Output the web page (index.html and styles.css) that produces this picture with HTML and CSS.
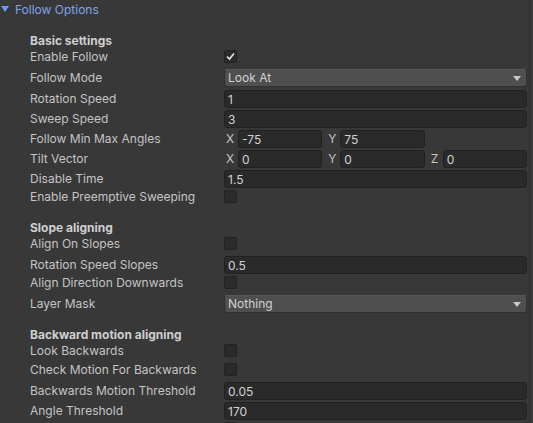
FILE: index.html
```html
<!DOCTYPE html>
<html>
<head>
<meta charset="utf-8">
<link rel="stylesheet" href="styles.css">
</head>
<body>
<div class="panel">
  <div class="foldout">
    <svg class="fold-arrow" width="8" height="7" viewBox="0 0 8 7"><polygon points="0,0 8,0 4,6" fill="#6d9cf0"/></svg>
    <span>Follow Options</span>
  </div>

  <div class="section-title">Basic settings</div>
  <div class="row cb-row"><span class="label">Enable Follow</span><span class="checkbox checked"><svg width="13" height="13" viewBox="0 0 13 13"><polyline points="3,6.5 5.5,9 10,3.5" fill="none" stroke="#e6e6e6" stroke-width="1.6"/></svg></span></div>
  <div class="row dd-row"><span class="label">Follow Mode</span><span class="dropdown"><span>Look At</span><svg width="8" height="5" viewBox="0 0 8 5"><polygon points="0,0 8,0 4,5" fill="#c8c8c8"/></svg></span></div>
  <div class="row"><span class="label">Rotation Speed</span><span class="field">1</span></div>
  <div class="row"><span class="label">Sweep Speed</span><span class="field">3</span></div>
  <div class="row"><span class="label">Follow Min Max Angles</span>
    <span class="vector">
      <span class="comp"><span class="axis">X</span><span class="field">-75</span></span>
      <span class="comp"><span class="axis">Y</span><span class="field">75</span></span>
    </span>
  </div>
  <div class="row"><span class="label">Tilt Vector</span>
    <span class="vector">
      <span class="comp"><span class="axis">X</span><span class="field">0</span></span>
      <span class="comp"><span class="axis">Y</span><span class="field">0</span></span>
      <span class="comp"><span class="axis">Z</span><span class="field">0</span></span>
    </span>
  </div>
  <div class="row"><span class="label">Disable Time</span><span class="field">1.5</span></div>
  <div class="row cb-row"><span class="label">Enable Preemptive Sweeping</span><span class="checkbox"></span></div>

  <div class="section-title">Slope aligning</div>
  <div class="row cb-row"><span class="label">Align On Slopes</span><span class="checkbox"></span></div>
  <div class="row"><span class="label">Rotation Speed Slopes</span><span class="field">0.5</span></div>
  <div class="row cb-row"><span class="label">Align Direction Downwards</span><span class="checkbox"></span></div>
  <div class="row dd-row"><span class="label">Layer Mask</span><span class="dropdown"><span>Nothing</span><svg width="8" height="5" viewBox="0 0 8 5"><polygon points="0,0 8,0 4,5" fill="#c8c8c8"/></svg></span></div>

  <div class="section-title">Backward motion aligning</div>
  <div class="row cb-row"><span class="label">Look Backwards</span><span class="checkbox"></span></div>
  <div class="row cb-row"><span class="label">Check Motion For Backwards</span><span class="checkbox"></span></div>
  <div class="row"><span class="label">Backwards Motion Threshold</span><span class="field">0.05</span></div>
  <div class="row"><span class="label">Angle Threshold</span><span class="field">170</span></div>
  <div class="row cb-row"><span class="label"></span><span class="checkbox"></span></div>
</div>
</body>
</html>
```

FILE: styles.css
```css
html, body {
  margin: 0;
  padding: 0;
  background: #383838;
  overflow: hidden;
}

body {
  width: 533px;
  height: 423px;
  font-family: Inter, "Noto Sans", "Liberation Sans", sans-serif;
  font-size: 12px;
  color: #c4c4c4;
}

.panel {
  width: 530px;
  height: 423px;
  box-sizing: border-box;
  border-right: 1px solid #2c2c2c;
  padding-right: 2px;
  display: flex;
  flex-direction: column;
  gap: 2px;
  overflow: hidden;
}

.foldout {
  height: 19px;
  display: flex;
  align-items: center;
  gap: 6px;
  padding-left: 1px;
  color: #7ea3ea;
  line-height: 19px;
}

.fold-arrow {
  display: block;
  flex: none;
}

.section-title {
  height: 18px;
  line-height: 18px;
  padding-top: 1px;
  box-sizing: border-box;
  margin-top: 10px;
  margin-bottom: -2px;
  padding-left: 30px;
  font-weight: 700;
  color: #cfcfcf;
}

.row {
  display: grid;
  grid-template-columns: 194px 1fr;
  padding-left: 30px;
  height: 18px;
  align-items: center;
  flex: none;
}

.label {
  white-space: nowrap;
  line-height: 19px;
  align-self: center;
}

.cb-row {
  height: 17px;
  align-items: start;
}

.cb-row .label {
  line-height: 16px;
  align-self: start;
}

.dd-row {
  height: 19px;
  align-items: end;
}

.dd-row .label {
  line-height: 18px;
  align-self: end;
}

.field {
  display: block;
  height: 18px;
  box-sizing: border-box;
  background: #2a2a2a;
  border: 1px solid #212121;
  border-radius: 3px;
  padding-left: 3px;
  line-height: 17px;
  color: #d2d2d2;
  white-space: nowrap;
  overflow: hidden;
}

.dropdown {
  height: 18px;
  box-sizing: border-box;
  background: #4f4f4f;
  border: 1px solid #303030;
  border-top-color: #585858;
  border-radius: 3px;
  padding: 0 5px 0 3px;
  display: flex;
  align-items: center;
  justify-content: space-between;
  color: #d2d2d2;
  line-height: 16px;
}

.dropdown svg {
  display: block;
}

.checkbox {
  display: block;
  width: 13px;
  height: 13px;
  margin-top: 1px;
  box-sizing: border-box;
  background: #2b2b2b;
  border: 1px solid #232323;
  border-radius: 2px;
  position: relative;
}

.checkbox svg {
  position: absolute;
  left: -1px;
  top: -1px;
}

.vector {
  display: grid;
  grid-template-columns: 1fr 1fr 1fr;
  gap: 4px;
}

.comp {
  display: grid;
  grid-template-columns: 14px 1fr;
  align-items: center;
}

.axis {
  padding-left: 2px;
  line-height: 19px;
  color: #c4c4c4;
}
```
